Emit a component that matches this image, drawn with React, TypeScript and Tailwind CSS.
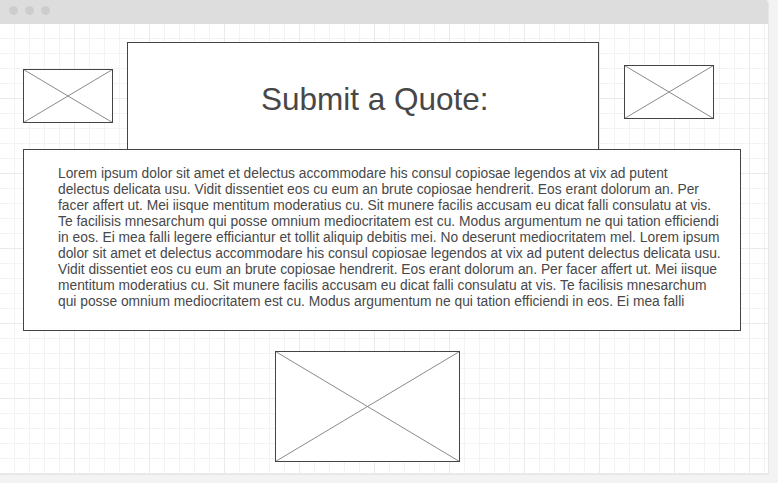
import React from 'react';

const lines = [
  'Lorem ipsum dolor sit amet et delectus accommodare his consul copiosae legendos at vix ad putent',
  'delectus delicata usu. Vidit dissentiet eos cu eum an brute copiosae hendrerit. Eos erant dolorum an. Per',
  'facer affert ut. Mei iisque mentitum moderatius cu. Sit munere facilis accusam eu dicat falli consulatu at vis.',
  'Te facilisis mnesarchum qui posse omnium mediocritatem est cu. Modus argumentum ne qui tation efficiendi',
  'in eos. Ei mea falli legere efficiantur et tollit aliquip debitis mei. No deserunt mediocritatem mel. Lorem ipsum',
  'dolor sit amet et delectus accommodare his consul copiosae legendos at vix ad putent delectus delicata usu.',
  'Vidit dissentiet eos cu eum an brute copiosae hendrerit. Eos erant dolorum an. Per facer affert ut. Mei iisque',
  'mentitum moderatius cu. Sit munere facilis accusam eu dicat falli consulatu at vis. Te facilisis mnesarchum',
  'qui posse omnium mediocritatem est cu. Modus argumentum ne qui tation efficiendi in eos. Ei mea falli',
];

// image placeholder: box with an X through it
function Placeholder({ w, h, className }: { w: number; h: number; className?: string }) {
  return (
    <svg width={w} height={h} viewBox={`0 0 ${w} ${h}`} className={`block shrink-0 ${className ?? ''}`}>
      <rect x="0" y="0" width={w} height={h} fill="#ffffff" />
      <line x1="0.5" y1="0.5" x2={w - 0.5} y2={h - 0.5} stroke="#8a8a8a" strokeWidth="1" />
      <line x1="0.5" y1={h - 0.5} x2={w - 0.5} y2="0.5" stroke="#8a8a8a" strokeWidth="1" />
      <rect x="0.5" y="0.5" width={w - 1} height={h - 1} fill="none" stroke="#444444" strokeWidth="1" />
    </svg>
  );
}

export default function App() {
  return (
    <div className="w-[778px] h-[483px] bg-[#f3f3f3] overflow-hidden font-['Liberation_Sans',Arial,sans-serif]">
      <div className="w-[769px] h-[475px] flex flex-col rounded-tr-[4px] overflow-hidden border-r border-b border-[#e6e6e6]">
        {/* window bar */}
        <div className="h-[24px] shrink-0 bg-[#dddddd] flex items-start pt-[6px] pl-[9px] gap-[7px]">
          <div className="w-[9px] h-[9px] rounded-full bg-[#cdcdcd]" />
          <div className="w-[9px] h-[9px] rounded-full bg-[#cdcdcd]" />
          <div className="w-[9px] h-[9px] rounded-full bg-[#cdcdcd]" />
        </div>

        {/* canvas */}
        <div className="flex-1 bg-white bg-[linear-gradient(to_right,transparent_74px,#eaeaea_74px),linear-gradient(to_bottom,transparent_74px,#eaeaea_74px),linear-gradient(to_right,transparent_14px,#f3f3f3_14px),linear-gradient(to_bottom,transparent_14px,#f3f3f3_14px)] [background-size:75px_75px,75px_75px,15px_15px,15px_15px]">
          <div className="flex items-start">
            <Placeholder w={90} h={54} className="ml-[23px] mt-[45px]" />
            <div className="ml-[14px] mt-[18px] w-[472px] h-[107px] bg-white border border-b-0 border-[#444444] pl-[133px] pt-[38px]">
              <div className="text-[31.5px] leading-[36px] text-[#474747] whitespace-nowrap">Submit a Quote:</div>
            </div>
            <Placeholder w={90} h={54} className="ml-[25px] mt-[41px]" />
          </div>

          <div className="ml-[23px] w-[718px] h-[182px] bg-white border border-[#444444] pl-[34px] pt-[16px]">
            {lines.map((l, i) => (
              <div key={i} className="text-[13.8px] leading-[16px] text-[#484848] whitespace-nowrap">
                {l}
              </div>
            ))}
          </div>

          <Placeholder w={185} h={111} className="ml-[275px] mt-[20px]" />
        </div>
      </div>
    </div>
  );
}
